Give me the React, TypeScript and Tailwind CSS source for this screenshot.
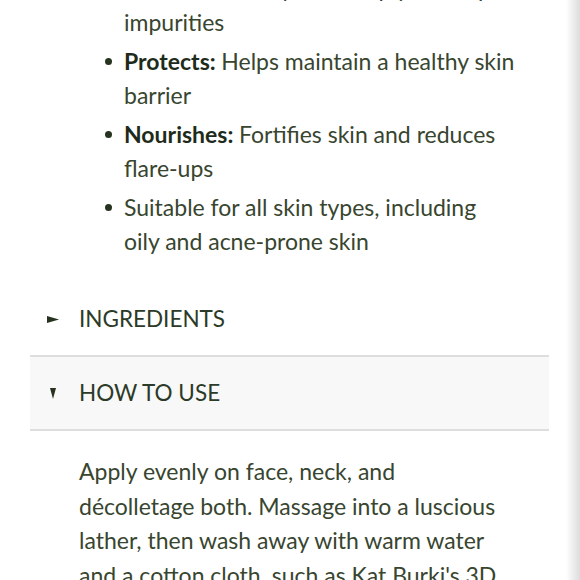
import { Fragment } from "react";

const items = [
  { label: "Cleanses:", lines: ["Gently and deeply clears pores of", "impurities"] },
  { label: "Protects:", lines: ["Helps maintain a healthy skin", "barrier"] },
  { label: "Nourishes:", lines: ["Fortifies skin and reduces", "flare-ups"] },
  { label: "", lines: ["Suitable for all skin types, including", "oily and acne-prone skin"] },
];

const howTo = [
  "Apply evenly on face, neck, and",
  "décolletage both. Massage into a luscious",
  "lather, then wash away with warm water",
  "and a cotton cloth, such as Kat Burki's 3D",
];

export default function App() {
  return (
    <div className="relative w-[580px] h-[580px] overflow-hidden bg-white text-[#38452f] font-['Lato',sans-serif] text-[23px] leading-[34px] whitespace-nowrap">
      <ul className="mt-[-29px] pl-[124px] flex flex-col gap-[5px]">
        {items.map((it, i) => (
          <li key={i} className="relative">
            <span className="absolute left-[-19px] top-[14px] w-[7px] h-[7px] rounded-full bg-[#26331f]" />
            {it.label && <b className="font-bold text-[#1e2b1a]">{it.label} </b>}
            {it.lines.map((l, j) => (
              <Fragment key={j}>
                {j > 0 && <br />}
                {l}
              </Fragment>
            ))}
          </li>
        ))}
      </ul>

      <div className="mt-[25px] mx-[30px] w-[519px]">
        <div className="h-[74px] flex items-center border-b-2 border-[#dedede]">
          <svg width="12" height="7" viewBox="0 0 12 7" className="ml-[17px] mr-[20px] shrink-0">
            <polygon points="0,0 12,3.5 0,7" fill="#26331f" />
          </svg>
          <span className="uppercase text-[22.5px] text-[#2c3a28]">Ingredients</span>
        </div>
        <div className="h-[74px] flex items-center bg-[#f8f8f8] border-b-2 border-[#dedede]">
          <svg width="6" height="11" viewBox="0 0 6 11" className="ml-[20px] mr-[23px] shrink-0">
            <polygon points="0,0 6,0 3,11" fill="#26331f" />
          </svg>
          <span className="uppercase text-[22.5px] text-[#2c3a28]">How to use</span>
        </div>
      </div>

      <p className="mt-[23px] pl-[79px] leading-[34.5px]">
        {howTo.map((l, j) => (
          <Fragment key={j}>
            {j > 0 && <br />}
            {l}
          </Fragment>
        ))}
      </p>

      <div className="absolute top-0 right-0 h-full w-[14px] bg-gradient-to-r from-transparent to-[#dcdcdc]" />
    </div>
  );
}
